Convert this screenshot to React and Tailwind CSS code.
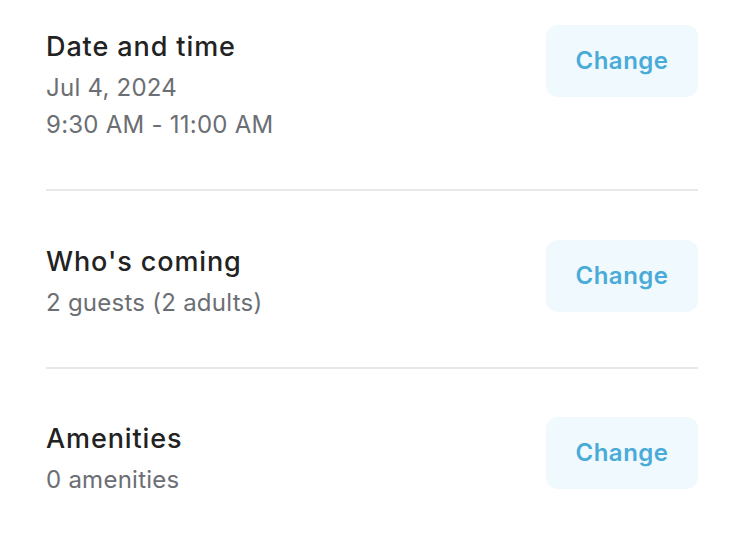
export default function App() {
  const sections = [
    { title: "Date and time", lines: ["Jul 4, 2024", "9:30 AM - 11:00 AM"], cls: "pt-[25px] pb-[46px] border-b-2 border-[#e8e8e8]" },
    { title: "Who's coming", lines: ["2 guests (2 adults)"], cls: "pt-[49px] pb-[46px] border-b-2 border-[#e8e8e8]" },
    { title: "Amenities", lines: ["0 amenities"], cls: "pt-[48px]" },
  ];
  return (
    <div className="w-[740px] h-[536px] bg-white pl-[46px] pr-[42px] overflow-hidden" style={{ fontFamily: "Inter, sans-serif" }}>
      {sections.map((s, i) => (
        <div key={i} className={s.cls}>
          <div className="flex items-start justify-between">
            <div className="flex flex-col">
              <div className="text-[27px] leading-[44px] tracking-[0.9px] font-medium text-[#222222]">{s.title}</div>
              {s.lines.map((l, j) => (
                <div key={j} className="text-[24px] leading-[37px] tracking-[0.25px] text-[#6b6e73]">{l}</div>
              ))}
            </div>
            <button className="w-[152px] h-[72px] rounded-[12px] bg-[#f0f9fd] text-[#4aabd8] text-[24px] tracking-[0.5px] font-semibold flex items-center justify-center">
              Change
            </button>
          </div>
        </div>
      ))}
    </div>
  );
}
